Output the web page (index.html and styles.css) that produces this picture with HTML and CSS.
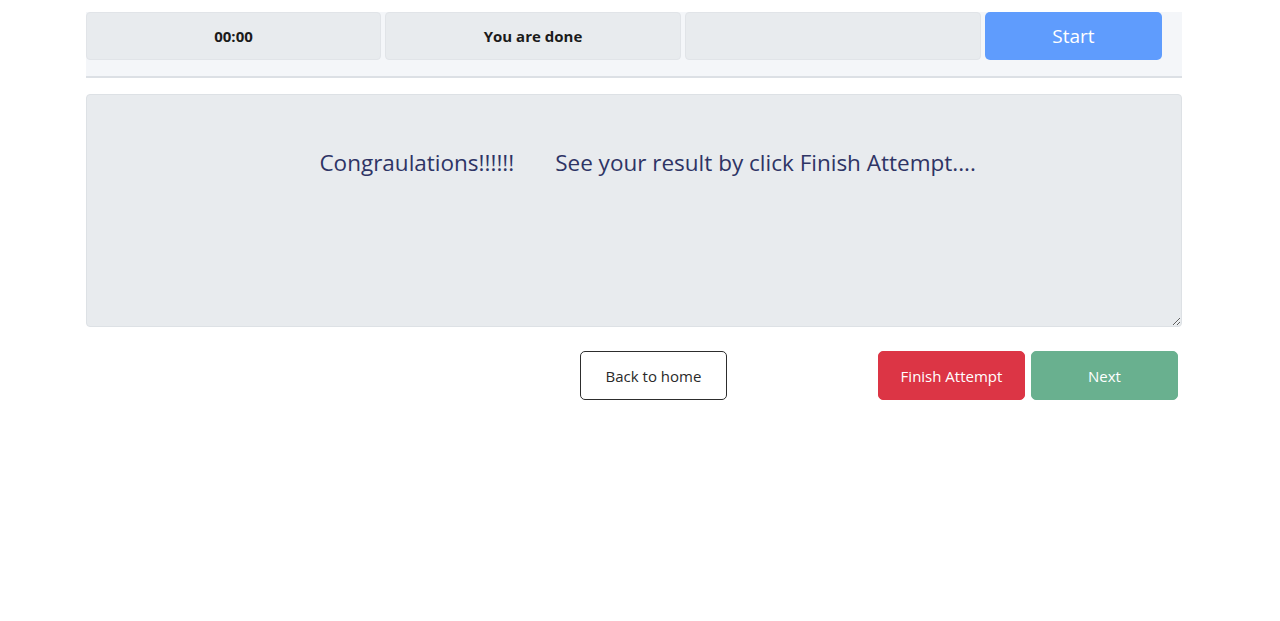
FILE: index.html
```html
<!DOCTYPE html>
<html>
<head>
<meta charset="utf-8">
<link rel="stylesheet" href="styles.css">
</head>
<body>
<div class="page">
  <div class="bar">
    <div class="cell c1">00:00</div>
    <div class="cell c2">You are done</div>
    <div class="cell c3"></div>
    <button class="start">Start</button>
  </div>
  <textarea class="answer" readonly>    Congraulations!!!!!!       See your result by click Finish Attempt....</textarea>
  <div class="actions">
    <button class="btn back">Back to home</button>
    <div class="right">
      <button class="btn finish">Finish Attempt</button>
      <button class="btn next">Next</button>
    </div>
  </div>
</div>
</body>
</html>
```
FILE: styles.css
```css
html, body {
  margin: 0;
  padding: 0;
  background: #ffffff;
  font-family: "Open Sans", "Noto Sans", sans-serif;
}
.page {
  width: 1096px;
  margin: 0 0 0 86px;
  padding-top: 12px;
}
.bar {
  display: flex;
  gap: 4px;
  background: #f4f6f9;
  height: 64px;
  border-bottom: 2px solid #dce0e5;
  align-items: flex-start;
}
.cell {
  height: 48px;
  box-sizing: border-box;
  background: #e8ebee;
  border: 1px solid #e1e4e8;
  border-radius: 4px;
  display: flex;
  align-items: center;
  justify-content: center;
  font-weight: 700;
  font-size: 15px;
  color: #1b1b1b;
}
.c1 { width: 295px; }
.c2 { width: 296px; }
.c3 { width: 296px; }
.start {
  width: 177px;
  height: 48px;
  border: none;
  border-radius: 5px;
  background: #5f9cfd;
  color: #ffffff;
  font-family: inherit;
  font-size: 19px;
  padding: 0;
}
.answer {
  display: block;
  margin-top: 16px;
  width: 1096px;
  height: 233px;
  box-sizing: border-box;
  background: #e8ebee;
  border: 1px solid #dde1e5;
  border-radius: 4px;
  text-align: center;
  font-family: inherit;
  font-size: 22.5px;
  color: #2e3465;
  padding: 52px 12px 12px 16px;
  white-space: pre-wrap;
  outline: none;
}
.actions {
  display: flex;
  margin-top: 24px;
  padding-left: 494px;
  padding-right: 4px;
}
.right {
  display: flex;
  gap: 6px;
  margin-left: auto;
}
.btn {
  width: 147px;
  height: 49px;
  border-radius: 5px;
  font-family: inherit;
  font-size: 15px;
  padding: 0;
}
.back {
  background: #ffffff;
  border: 1px solid #2d2d2d;
  color: #2a2a2a;
}
.finish {
  background: #dc3545;
  border: 1px solid #dc3545;
  color: #ffffff;
}
.next {
  background: #69b08f;
  border: 1px solid #69b08f;
  color: #ffffff;
}
```
